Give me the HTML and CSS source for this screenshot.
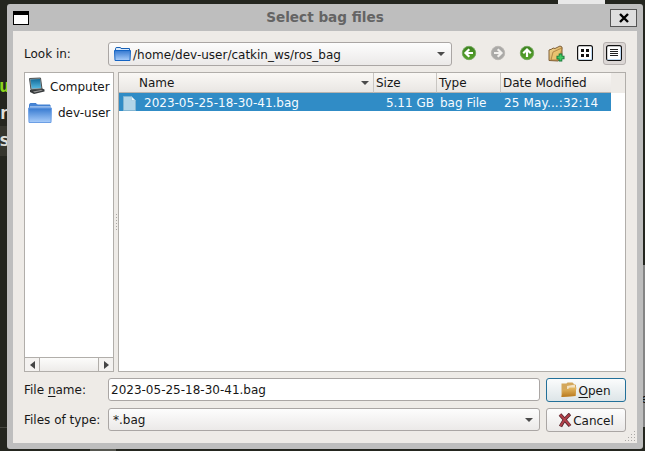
FILE: index.html
```html
<!DOCTYPE html>
<html lang="en">
<head>
<meta charset="utf-8">
<title>Select bag files</title>
<link rel="stylesheet" href="styles.css">
</head>
<body>
<div class="desktop">
  <div class="terminal">
    <span class="term-line green">u</span><span class="term-line">r</span><span class="term-line shade">s</span>
  </div>
  <div class="back-tab"></div>
  <div class="back-panel"></div>
  <div class="back-line"></div>
  <span class="back-char">e</span>
  <div class="back-foot"></div>
  <main class="dialog">
    <header class="titlebar">
      <span class="window-icon"></span>
      <h1 class="title">Select bag files</h1>
      <button class="close" aria-label="Close"><svg width="10" height="10" viewBox="0 0 10 10"><path d="M1 1l8 8M9 1L1 9" stroke="#000" stroke-width="2.4"/></svg></button>
    </header>
    <div class="content">
      <div class="row look">
        <label class="label">Look in:</label>
        <div class="combo path">
          <svg width="17" height="15" viewBox="0 0 17 15"><defs><linearGradient id="blue" x2="0" y2="1"><stop stop-color="#3579d0"/><stop offset="1" stop-color="#a9cdfa"/></linearGradient></defs><path d="M1.5 3V1.500Q1.500.500 3 .500h3q1 0 1 1h8.500V4" fill="#d9e9fb" stroke="#1760b5"/><path d="M.5 3.500h16L16 13.500H1z" fill="url(#blue)" stroke="#1464c4"/></svg>
          <span>/home/dev-user/catkin_ws/ros_bag</span><i class="arrow"></i>
        </div>
        <div class="tools">
          <button class="tool" aria-label="Back"><svg width="16" height="16" viewBox="0 0 16 16"><defs><linearGradient id="green" x2="0" y2="1"><stop stop-color="#3b8220"/><stop offset=".55" stop-color="#4c9426"/><stop offset="1" stop-color="#55a42a"/></linearGradient></defs><circle cx="8" cy="8" r="6.700" fill="url(#green)" stroke="#76a960"/><path d="M12 8H5M8.300 4.200L4.500 8l3.800 3.800" fill="none" stroke="#fff" stroke-width="2.200"/></svg></button>
          <button class="tool" aria-label="Forward"><svg width="16" height="16" viewBox="0 0 16 16"><circle cx="8" cy="8" r="6.700" fill="#aaa9a7" stroke="#bbb8b4"/><path d="M4 8h7M7.700 4.200L11.500 8l-3.800 3.800" fill="none" stroke="#f3f1ee" stroke-width="2.200"/></svg></button>
          <button class="tool" aria-label="Parent directory"><svg width="16" height="16" viewBox="0 0 16 16"><circle cx="8" cy="8" r="6.700" fill="url(#green)" stroke="#76a960"/><path d="M8 12V5M4.200 8.300L8 4.500l3.800 3.800" fill="none" stroke="#fff" stroke-width="2.200"/></svg></button>
          <button class="tool" aria-label="New folder"><svg width="17" height="17" viewBox="0 0 17 17"><defs><linearGradient id="tan" x2="1" y2="1"><stop stop-color="#f6db98"/><stop offset="1" stop-color="#c99845"/></linearGradient></defs><path d="M1 15.500V5l3-1 1-1 2 .5 5-2.500 2 1v9l-4 5z" fill="url(#tan)" stroke="#806039"/><path d="M3 15L5 7l9-4-2 8-3 4z" fill="#eac36f" stroke="#9c7137" stroke-width=".7"/><path d="M12.500 8.500v8M8.500 12.500h8" stroke="#167738" stroke-width="3.600"/><path d="M12.500 9.500v6M9.500 12.500h6" stroke="#43c963" stroke-width="2"/></svg></button>
          <button class="tool" aria-label="Icon view"><svg width="16" height="16" viewBox="0 0 16 16"><rect x=".6" y=".6" width="14.800" height="14.800" rx="2" fill="#fff" stroke="#111" stroke-width="1.200"/><path d="M1.500 14.500h13v-12" fill="none" stroke="#bdd8f1"/><path d="M4 4h3v3H4zM9 4h3v3H9zM4 9h3v3H4zM9 9h3v3H9z" fill="#111"/></svg></button>
          <button class="tool active" aria-label="Detail view"><svg width="16" height="16" viewBox="0 0 16 16"><rect x=".6" y=".6" width="14.800" height="14.800" rx="2" fill="#fff" stroke="#111" stroke-width="1.200"/><path d="M1.500 14.500h13v-12" fill="none" stroke="#bdd8f1"/><path d="M4 4.500h8M4 6.500h8M4 8.500h8M4 10.500h8" stroke="#222"/></svg></button>
        </div>
      </div>
      <div class="views">
        <aside class="places">
          <div class="place"><svg width="18" height="18" viewBox="0 0 18 18"><defs><linearGradient id="screen" x2="0" y2="1"><stop stop-color="#146b99"/><stop offset="1" stop-color="#55b9e2"/></linearGradient></defs><path d="M2 13l11-2 3.500 1.500v2L6 17l-4-2z" fill="#373b3d"/><path d="M5 14.500l8-1.500 2 .5-8.500 2z" fill="#999"/><path d="M1.500 1.500L12.500 1l1.500 11-11 .8z" fill="#9ea4a4" stroke="#4b5153"/><path d="M2.500 2.500l9.500-.5 1 9-9.300.6z" fill="url(#screen)"/></svg><span>Computer</span></div>
          <div class="place user"><svg width="24" height="20" viewBox="0 0 24 20"><path d="M1.500 5V1.500Q1.500.500 3 .500h5l1.500 1.500H22V5" fill="#4584d6" stroke="#417fcf"/><path d="M2 4h20" stroke="#dbeafe"/><path d="M.5 5h23l-.5 14.500H1z" fill="url(#blue)" stroke="#6c9fe5"/></svg><span>dev-user</span></div>
          <div class="scroll"><b class="scroll-btn"><i class="left"></i></b><span class="thumb"></span><b class="scroll-btn"><i class="right"></i></b></div>
        </aside>
        <div class="splitter"><i></i><i></i><i></i><i></i><i></i><i></i></div>
        <section class="files">
          <div class="file-row heads"><span class="name">Name<i class="arrow"></i></span><span>Size</span><span>Type</span><span>Date Modified</span></div>
          <div class="file-row selected"><span class="name"><svg width="13" height="15" viewBox="0 0 13 15"><path d="M.5.500h8l4 4v10H.5z" fill="#b2d5e8" stroke="#82b5d2"/><path d="M8.500.500v4h4z" fill="#edf7fc" stroke="#93bfd6" stroke-width=".5"/></svg>2023-05-25-18-30-41.bag</span><span class="size">5.11 GB</span><span>bag File</span><span class="date">25 May...:32:14</span></div>
        </section>
      </div>
      <div class="row form">
        <label class="label">File <u>n</u>ame:</label>
        <div class="combo input">2023-05-25-18-30-41.bag</div>
        <button class="button primary"><svg width="16" height="16" viewBox="0 0 16 16"><defs><linearGradient id="open" x2="0" y2="1"><stop stop-color="#e6bb66"/><stop offset="1" stop-color="#b8781d"/></linearGradient></defs><path d="M.5 15V1.500h5l1-1h5L13 2l2 1v11z" fill="#d4a75b"/><path d="M6 4l8-1.500V6L6 7z" fill="#f2e2c3"/><path d="M.5 15L2 7.500h5L8.500 5.500h7L14 14z" fill="url(#open)"/></svg><span><u>O</u>pen</span></button>
      </div>
      <div class="row form">
        <label class="label">Files of type:</label>
        <div class="combo type">*.bag<i class="arrow"></i></div>
        <button class="button"><svg width="14" height="15" viewBox="0 0 14 15"><path d="M2 1.500Q7 7 12 13M12 1Q6 6 2.500 13.500" fill="none" stroke="#55242b" stroke-width="3.500"/><path d="M2 1.500Q7 7 12 12.500M11.500 1.500Q6 6 2.500 13" fill="none" stroke="#b3414b" stroke-width="1.900"/></svg><span>Cancel</span></button>
      </div>
    </div>
    <svg class="grip" width="12" height="12" viewBox="0 0 12 12"><path d="M9 0h1v1H9zM6 3h1v1H6zM9 3h1v1H9zM3 6h1v1H3zM6 6h1v1H6zM9 6h1v1H9zM0 9h1v1H0zM3 9h1v1H3zM6 9h1v1H6zM9 9h1v1H9z" fill="#aaa8a5"/></svg>
  </main>
</div>
</body>
</html>
```
FILE: styles.css
```css
* { box-sizing: border-box; }
body { margin: 0; font: 12px/16px "DejaVu Sans", sans-serif; color: #171717; }
button { font: inherit; color: inherit; padding: 0; border: 0; background: none; }
svg { display: block; flex: none; }
i { font-style: normal; }
.desktop { position: relative; width: 645px; height: 451px; padding: 4px 2px 2px 7px; overflow: hidden; background: #24261f; }
.terminal { position: absolute; left: 0; top: 72px; width: 12px; display: flex; flex-direction: column; font: bold 18px/28px "DejaVu Sans Mono", monospace; color: #dedfd9; }
.term-line { height: 27px; margin-left: -1px; }
.green { color: #8bd51c; }
.shade { background: #35362e; height: 30px; }
.back-tab { position: absolute; left: 558px; top: 0; width: 47px; height: 5px; background: #e8e8e8; }
.back-panel { position: absolute; left: 643px; top: 265px; width: 2px; height: 162px; background: #858585; }
.back-line { position: absolute; left: 0; top: 427px; width: 7px; height: 1px; background: #45463f; }
.back-char { position: absolute; left: 641px; top: 391px; font-size: 12px; color: #111; }
.back-foot { position: absolute; left: 90px; top: 449px; width: 26px; height: 2px; background: #55564f; }
.dialog { position: relative; width: 636px; height: 445px; padding: 0 6px 6px; border-radius: 3px; background: #bebebe; }
.titlebar { height: 27px; display: grid; grid-template-columns: 27px 1fr 27px; align-items: center; }
.window-icon { width: 16px; height: 14px; margin-top: 1px; border: 1px solid #000; border-top-width: 4px; background: #fff; }
.title { margin: 0; text-align: center; font-size: 13.6px; line-height: 25px; color: #646464; }
.close { width: 27px; height: 18px; display: grid; place-items: center; margin-top: 1px; border: 1px solid #555; background: #dedede; }
.content { height: 412px; padding: 11px; background: #eeebe7; }
.row { display: grid; align-items: center; }
.look { grid-template-columns: 84px 344px 1fr; height: 24px; }
.label { white-space: nowrap; }
.combo { display: flex; align-items: center; border: 1px solid #aaa6a4; border-radius: 3px; background: linear-gradient(#fdfdfd, #ebe9e8); height: 24px; }
.path { padding: 0 6px 0 5px; }
.path span { margin-left: 2px; padding-top: 1px; }
.arrow { width: 0; height: 0; margin-left: auto; border: 4px solid transparent; border-top-color: #4b4b4b; border-bottom: 0; }
.tools { display: flex; justify-content: flex-end; align-items: center; gap: 6px; }
.tool { width: 23px; height: 23px; display: grid; place-items: center; margin-top: -2px; }
.tool svg { margin-left: -1px; }
.tools .active svg { margin-left: -1px; }
.active { border: 1px solid #b5b0ae; border-radius: 3px; background: #dcd7d5; }
.views { height: 300px; margin-top: 6px; display: grid; grid-template-columns: 90px 4px 508px; }
.places { height: 300px; border: 1px solid #b1aeaa; background: #fff; display: flex; flex-direction: column; overflow: hidden; }
.place { height: 26px; display: flex; align-items: center; padding-left: 3px; gap: 4px; white-space: nowrap; }
.place span { padding-top: 2px; }
.user { gap: 6px; padding-top: 1px; }
.user span { padding-top: 0; }
.scroll { height: 14px; margin-top: auto; display: grid; grid-template-columns: 14px 1fr 14px; border-top: 1px solid #b1aeaa; }
.scroll-btn { display: grid; place-items: center; background: #f4f2f0; }
.thumb { border: solid #b1aeaa; border-width: 0 1px; background: linear-gradient(#fcfcfb, #edebe9); }
.left, .right { border: 4px solid transparent; }
.left { border-right: 5px solid #444; border-left: 0; }
.right { border-left: 5px solid #444; border-right: 0; }
.splitter { display: flex; flex-direction: column; align-items: center; justify-content: center; gap: 2px; }
.splitter i { width: 1px; height: 1px; background: #aaa7a4; }
.files { border: 1px solid #b1aeaa; background: #fff; }
.file-row { height: 20px; display: grid; grid-template-columns: 255px 63px 64px 110px; align-items: center; white-space: nowrap; }
.heads { background: #eeebe7; }
.heads span { height: 20px; line-height: 20px; padding-left: 2px; border-right: 1px solid #c9c6c2; border-bottom: 1px solid #b7b4b0; background: linear-gradient(#faf8f5, #e9e6e3); }
.heads span:last-child { border-right: 0; }
.heads .name { display: flex; align-items: center; padding: 0 4px 0 20px; }
.selected { width: 492px; height: 18px; color: #f6fbff; background: #308cc6; }
.selected span { padding-left: 3px; line-height: 18px; padding-top: 1px; }
.selected .name { display: flex; align-items: center; gap: 8px; padding-left: 4px; }
.selected .size { text-align: right; padding-right: 3px; }
.date { letter-spacing: .13px; }
.form { grid-template-columns: 84px 432px 86px; height: 24px; margin-top: 6px; }
.form .combo { height: 23px; align-self: start; }
.input { background: #fff; padding-left: 2px; }
.type { padding: 0 6px 0 4px; }
.button { width: 80px; height: 24px; display: flex; justify-content: center; align-items: center; gap: 1px; margin-left: 6px; border: 1px solid #aaa6a4; border-radius: 3px; background: linear-gradient(#fdfdfd, #ebe9e8); }
.button span { padding-top: 2px; }
.primary { border-color: #237099; background: linear-gradient(#fbfcfc, #dde5e8); }
u { text-decoration-thickness: 1px; text-underline-offset: 2px; }
.grip { position: absolute; right: 6px; bottom: 6px; }
```
